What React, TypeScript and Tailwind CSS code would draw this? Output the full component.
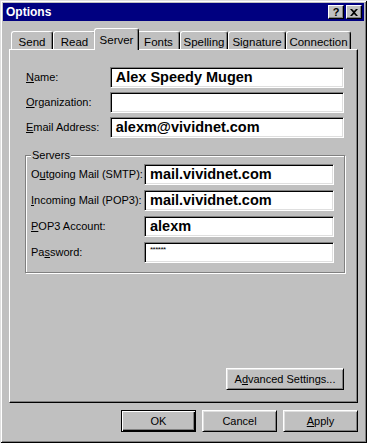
import React from "react";

const font = { fontFamily: '"Liberation Sans", Arial, sans-serif' };

function U({ children }: { children: React.ReactNode }) {
  return <span className="underline underline-offset-[1px]">{children}</span>;
}

function Field({ value, small }: { value?: string; small?: boolean }) {
  return (
    <div className="h-[21px] bg-white border border-t-[#808080] border-l-[#808080] border-b-white border-r-white shadow-[inset_1px_1px_0_#000,inset_-1px_-1px_0_#dfdfdf] flex items-center pl-[5px] overflow-hidden">
      {small ? (
        <span className="text-[8px] leading-none self-start mt-[3px] text-black tracking-[-0.5px]">******</span>
      ) : (
        <span className="text-[14.5px] font-bold text-black leading-none whitespace-nowrap">{value}</span>
      )}
    </div>
  );
}

function Btn({ children, w, def }: { children: React.ReactNode; w: string; def?: boolean }) {
  return (
    <div
      className={
        "h-[22px] flex items-center justify-center text-[11px] text-black " +
        w +
        (def
          ? " border border-black shadow-[inset_1px_1px_0_#fff,inset_-1px_-1px_0_#000,inset_-2px_-2px_0_#808080]"
          : " border border-t-white border-l-white border-b-black border-r-black shadow-[inset_1px_1px_0_#dfdfdf,inset_-1px_-1px_0_#808080]")
      }
    >
      {children}
    </div>
  );
}

function Tab({ label, w, sel }: { label: string; w: string; sel?: boolean }) {
  if (sel) {
    return (
      <div
        className={
          "relative z-10 h-[22px] -mb-[1px] -mx-[2px] bg-[#c0c0c0] border-t border-l border-white border-r border-r-black rounded-t-[3px] shadow-[inset_-1px_0_0_#808080] flex justify-center pt-[3px] text-[11.5px] text-black " +
          w
        }
      >
        {label}
      </div>
    );
  }
  return (
    <div
      className={
        "h-[18px] border-t border-l border-white border-r border-r-black rounded-t-[3px] shadow-[inset_-1px_0_0_#808080] flex justify-center pt-[2px] text-[11.5px] text-black " +
        w
      }
    >
      {label}
    </div>
  );
}

export default function App() {
  return (
    <div
      style={font}
      className="w-[367px] h-[443px] bg-[#c0c0c0] p-[3px] flex flex-col shadow-[inset_1px_1px_0_#dfdfdf,inset_-1px_-1px_0_#000,inset_2px_2px_0_#fff,inset_-2px_-2px_0_#808080]"
    >
      {/* Title bar */}
      <div className="h-[18px] bg-[#000080] flex items-center justify-between pl-[3px] pr-[2px]">
        <span className="text-white font-bold text-[12px] leading-none">Options</span>
        <div className="flex gap-[2px]">
          <div className="w-[16px] h-[14px] bg-[#c0c0c0] border border-t-white border-l-white border-b-black border-r-black shadow-[inset_-1px_-1px_0_#808080] flex items-center justify-center text-[11px] font-bold leading-none text-black">
            ?
          </div>
          <div className="w-[16px] h-[14px] bg-[#c0c0c0] border border-t-white border-l-white border-b-black border-r-black shadow-[inset_-1px_-1px_0_#808080] flex items-center justify-center">
            <svg width="8" height="7" viewBox="0 0 8 7">
              <path d="M0 0h2l2 2 2-2h2L5 3.5 8 7H6L4 5 2 7H0l3-3.5z" fill="#000" />
            </svg>
          </div>
        </div>
      </div>

      {/* Tabs */}
      <div className="mt-[7px] ml-[6px] pl-[2px] h-[21px] flex items-end">
        <Tab label="Send" w="w-[42px]" />
        <Tab label="Read" w="w-[43px]" />
        <Tab label="Server" w="w-[45px]" sel />
        <Tab label="Fonts" w="w-[43px]" />
        <Tab label="Spelling" w="w-[48px]" />
        <Tab label="Signature" w="w-[58px]" />
        <Tab label="Connection" w="w-[65px]" />
      </div>

      {/* Panel */}
      <div className="ml-[6px] w-[349px] h-[354px] border border-t-white border-l-white border-b-black border-r-black shadow-[inset_-1px_-1px_0_#808080] pt-[17px] pl-[15px] pr-[13px] flex flex-col text-[11px] text-black">
        <div className="flex flex-col gap-[4px]">
          <div className="flex items-center">
            <div className="w-[85px] pl-[1px]"><U>N</U>ame:</div>
            <div className="w-[235px]"><Field value="Alex Speedy Mugen" /></div>
          </div>
          <div className="flex items-center">
            <div className="w-[85px] pl-[1px]"><U>O</U>rganization:</div>
            <div className="w-[235px]"><Field value="" /></div>
          </div>
          <div className="flex items-center">
            <div className="w-[85px] pl-[1px]"><U>E</U>mail Address:</div>
            <div className="w-[235px]"><Field value="alexm@vividnet.com" /></div>
          </div>
        </div>

        {/* Servers group */}
        <div className="relative mt-[17px] w-[320px] h-[118px] border border-[#808080] shadow-[inset_1px_1px_0_#fff,1px_1px_0_#fff] pt-[8px] pl-[5px] pr-[8px]">
          <div className="absolute -top-[8px] left-[5px] px-[1px] bg-[#c0c0c0] leading-[14px]">Servers</div>
          <div className="flex flex-col gap-[5px]">
            <div className="flex items-center">
              <div className="w-[113px]">O<U>u</U>tgoing Mail (SMTP):</div>
              <div className="w-[190px]"><Field value="mail.vividnet.com" /></div>
            </div>
            <div className="flex items-center">
              <div className="w-[113px]"><U>I</U>ncoming Mail (POP3):</div>
              <div className="w-[190px]"><Field value="mail.vividnet.com" /></div>
            </div>
            <div className="flex items-center">
              <div className="w-[113px]"><U>P</U>OP3 Account:</div>
              <div className="w-[190px]"><Field value="alexm" /></div>
            </div>
            <div className="flex items-center">
              <div className="w-[113px]">Pa<U>s</U>sword:</div>
              <div className="w-[190px]"><Field small /></div>
            </div>
          </div>
        </div>

        <div className="mt-auto mb-[12px] flex justify-end">
          <Btn w="w-[118px]">
            A<U>d</U>vanced Settings...
          </Btn>
        </div>
      </div>

      {/* Bottom buttons */}
      <div className="mt-[7px] ml-[6px] w-[349px] flex justify-end gap-[6px]">
        <Btn w="w-[75px]" def>OK</Btn>
        <Btn w="w-[75px]">Cancel</Btn>
        <Btn w="w-[75px]"><U>A</U>pply</Btn>
      </div>
    </div>
  );
}
